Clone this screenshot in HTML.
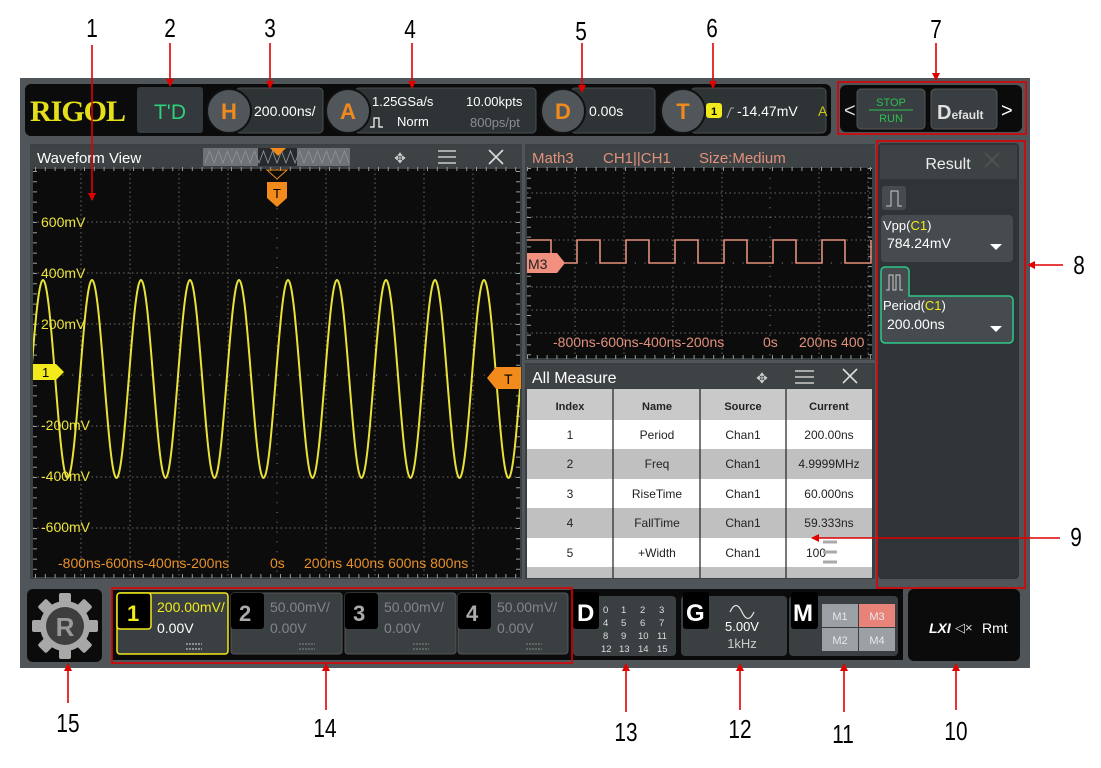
<!DOCTYPE html>
<html><head><meta charset="utf-8"><style>
html,body{margin:0;padding:0;background:#fff;width:1101px;height:768px;overflow:hidden}
svg{display:block;font-family:"Liberation Sans",sans-serif}
</style></head><body>
<svg width="1101" height="768" viewBox="0 0 1101 768" xmlns="http://www.w3.org/2000/svg">
<defs>
<clipPath id="cw"><rect x="33" y="169" width="487" height="408"/></clipPath>
<clipPath id="cm"><rect x="527" y="168" width="345" height="190"/></clipPath>
<marker id="ar" markerWidth="8" markerHeight="8" refX="7" refY="4" orient="auto" markerUnits="userSpaceOnUse"><path d="M0 0 L8 4 L0 8 z" fill="#e00000"/></marker>
</defs>
<rect x="20" y="78" width="1010" height="590" fill="#4f5558"/>
<rect x="25" y="84" width="806" height="52" rx="6" fill="#0b0b0b"/>
<text x="30" y="121" font-family="Liberation Serif,serif" font-weight="bold" font-size="30" fill="#e3e01a" letter-spacing="-1">RIGOL</text>
<rect x="137" y="87" width="66" height="46" rx="3" fill="#33393c"/>
<text x="170" y="119" font-size="21" fill="#2fd07a" text-anchor="middle">T'D</text>
<rect x="236" y="88" width="87" height="45" rx="4" fill="#2e3336" stroke="#4a4f52"/>
<circle cx="229" cy="111" r="22" fill="#50565a" stroke="#111" stroke-width="2"/>
<text x="229" y="119" font-size="22" font-weight="bold" fill="#f08a1c" text-anchor="middle">H</text>
<text x="254" y="116" font-size="14" fill="#fff">200.00ns/</text>
<rect x="355" y="88" width="181" height="45" rx="4" fill="#2e3336" stroke="#4a4f52"/>
<circle cx="348" cy="111" r="22" fill="#50565a" stroke="#111" stroke-width="2"/>
<text x="348" y="119" font-size="22" font-weight="bold" fill="#f08a1c" text-anchor="middle">A</text>
<text x="372" y="106" font-size="13" fill="#fff">1.25GSa/s</text>
<path d="M370 127 h4 v-9 h5 v9 h4" stroke="#fff" fill="none" stroke-width="1.2"/>
<text x="397" y="126" font-size="13" fill="#fff">Norm</text>
<text x="466" y="106" font-size="13" fill="#fff">10.00kpts</text>
<text x="470" y="127" font-size="13" fill="#8a8f92">800ps/pt</text>
<rect x="571" y="88" width="84" height="45" rx="4" fill="#2e3336" stroke="#4a4f52"/>
<circle cx="563" cy="111" r="22" fill="#50565a" stroke="#111" stroke-width="2"/>
<text x="563" y="119" font-size="22" font-weight="bold" fill="#f08a1c" text-anchor="middle">D</text>
<text x="589" y="116" font-size="14" fill="#fff">0.00s</text>
<rect x="691" y="88" width="135" height="45" rx="4" fill="#2e3336" stroke="#4a4f52"/>
<circle cx="683" cy="111" r="22" fill="#50565a" stroke="#111" stroke-width="2"/>
<text x="683" y="119" font-size="22" font-weight="bold" fill="#f08a1c" text-anchor="middle">T</text>
<rect x="706" y="103" width="16" height="15" rx="3" fill="#f2ea1a"/>
<text x="714" y="115" font-size="11" font-weight="bold" fill="#000" text-anchor="middle">1</text>
<path d="M727 118 l4 -10 h3" stroke="#aaa" fill="none"/>
<text x="737" y="116" font-size="14" fill="#fff">-14.47mV</text>
<text x="818" y="116" font-size="14" fill="#c8c81a">A</text>
<rect x="840" y="85" width="182" height="47" rx="6" fill="#0b0b0b"/>
<text x="844" y="117" font-size="20" fill="#ddd">&lt;</text>
<rect x="857" y="89" width="68" height="40" rx="4" fill="#383e41" stroke="#555"/>
<text x="891" y="106" font-size="11" fill="#2ec050" text-anchor="middle">STOP</text>
<line x1="869" y1="110" x2="913" y2="110" stroke="#2ec050"/>
<text x="891" y="122" font-size="11" fill="#2ec050" text-anchor="middle">RUN</text>
<rect x="931" y="89" width="66" height="40" rx="4" fill="#383e41" stroke="#555"/>
<text x="937" y="119" font-size="20" font-weight="bold" fill="#e0e0e0">D<tspan font-size="12">efault</tspan></text>
<text x="1001" y="117" font-size="20" fill="#fff">&gt;</text>

<rect x="30" y="144" width="492" height="435" fill="#3a3f42"/>
<rect x="30" y="145" width="492" height="23" fill="#3d4245"/>
<text x="37" y="163" font-size="15" fill="#fff">Waveform View</text>
<rect x="203" y="148" width="147" height="18" fill="#6e7376"/>
<rect x="258" y="148" width="39" height="18" fill="#262a2c"/>
<path d="M205 163 l4.5 -12 l4.5 12 l4.5 -12 l4.5 12 l4.5 -12 l4.5 12 l4.5 -12 l4.5 12 l4.5 -12 l4.5 12 l4.5 -12 l4.5 12 l4.5 -12 l4.5 12 l4.5 -12 l4.5 12 l4.5 -12 l4.5 12 l4.5 -12 l4.5 12 l4.5 -12 l4.5 12 l4.5 -12 l4.5 12 l4.5 -12 l4.5 12 l4.5 -12 l4.5 12 l4.5 -12 l4.5 12 l4.5 -12 l4.5 12" stroke="#8d9295" fill="none" stroke-width="0.9"/>
<path d="M270 148 h16 l-8 8z" fill="#f08a1c"/>
<text x="400" y="163" font-size="14" fill="#ccc" text-anchor="middle">✥</text>
<path d="M438 151 h18 M438 157 h18 M438 163 h18" stroke="#ccc" stroke-width="1.6"/>
<path d="M489 150 l14 14 M503 150 l-14 14" stroke="#ddd" stroke-width="1.6"/>
<rect x="33" y="169" width="487" height="408" fill="#0c0c0c"/>
<g stroke="#6a6a6a" stroke-width="1" stroke-dasharray="1.5 3" fill="none">
<path d="M81 169V577M130 169V577M179 169V577M228 169V577M326 169V577M375 169V577M424 169V577M473 169V577"/>
<path d="M33 222H520M33 273H520M33 324H520M33 426H520M33 477H520M33 528H520"/>
</g>
<g stroke="#888" stroke-width="1" stroke-dasharray="1 8.8" fill="none"><path d="M33 375H520M277 169V577"/></g>
<g stroke="#999" stroke-width="4" stroke-dasharray="1 8.8" fill="none"><path d="M35 169H520M35 576H520"/></g>
<g stroke="#999" stroke-width="4" stroke-dasharray="1 9.2" fill="none"><path d="M35 171V577M518 171V577"/></g>
<g clip-path="url(#cw)">
<path d="M18.5 478 C27.4 478 34.1 280 43 280 S58.6 478 67.5 478 S83.1 280 92 280 S107.6 478 116.5 478 S132.1 280 141 280 S156.6 478 165.5 478 S181.1 280 190 280 S205.6 478 214.5 478 S230.1 280 239 280 S254.6 478 263.5 478 S279.1 280 288 280 S303.6 478 312.5 478 S328.1 280 337 280 S352.6 478 361.5 478 S377.1 280 386 280 S401.6 478 410.5 478 S426.1 280 435 280 S450.6 478 459.5 478 S475.1 280 484 280 S499.6 478 508.5 478 S524.1 280 533 280" stroke="#e8e23a" stroke-width="2" fill="none"/>
</g>
<g font-size="14" fill="#ece43a">
<text x="41" y="227">600mV</text><text x="41" y="278">400mV</text><text x="41" y="329">200mV</text>
<text x="41" y="430">-200mV</text><text x="41" y="481">-400mV</text><text x="41" y="532">-600mV</text>
</g>
<g font-size="14" fill="#e8902a">
<text x="58" y="568">-800ns-600ns-400ns-200ns</text><text x="270" y="568">0s</text><text x="304" y="568">200ns 400ns 600ns 800ns</text>
</g>
<path d="M33 364 h23 l8 8 l-8 8 h-23z" fill="#f2ea1a"/>
<text x="42" y="377" font-size="13" fill="#000">1</text>
<path d="M521 367 v22 h-25 l-9 -11 l9 -11z" fill="#f28a1c"/>
<text x="504" y="384" font-size="14" fill="#000">T</text>
<path d="M267 170 h20 l-10 9z" fill="none" stroke="#f08a1c"/>
<path d="M267 182 h20 v16 l-10 9 l-10 -9z" fill="#f28a1c"/>
<text x="277" y="198" font-size="13" fill="#000" text-anchor="middle">T</text>

<rect x="525" y="144" width="350" height="216" fill="#3a3f42"/>
<rect x="525" y="145" width="350" height="23" fill="#3d4245"/>
<g font-size="15" fill="#e3907c"><text x="532" y="163">Math3</text><text x="603" y="163">CH1||CH1</text><text x="699" y="163">Size:Medium</text></g>
<rect x="527" y="168" width="345" height="190" fill="#0c0c0c"/>
<g stroke="#6a6a6a" stroke-dasharray="1.5 3" fill="none">
<path d="M575 168V358M624 168V358M673 168V358M722 168V358M819 168V358M868 168V358"/>
<path d="M527 193H872M527 217H872M527 240H872M527 287H872M527 310H872M527 333H872"/>
</g>
<g stroke="#999" stroke-dasharray="1 8.8" fill="none"><path d="M527 263H872M770 168V358"/></g>
<g stroke="#999" stroke-width="4" stroke-dasharray="1 8.8" fill="none"><path d="M527 169H872M527 357H872M529 168V358M870 168V358"/></g>
<g clip-path="url(#cm)">
<path d="M527 240 H551 V263 H577 V240 H600 V263 H626 V240 H649 V263 H675 V240 H698 V263 H724 V240 H747 V263 H773 V240 H796 V263 H822 V240 H845 V263 H871 V240" stroke="#e3907c" stroke-width="1.6" fill="none"/>
</g>
<path d="M527 253 h30 l8 10 l-8 10 h-30z" fill="#f29080"/>
<text x="528" y="269" font-size="14" fill="#222">M3</text>
<g font-size="14" fill="#e3907c"><text x="553" y="347">-800ns-600ns-400ns-200ns</text><text x="763" y="347">0s</text><text x="799" y="347">200ns 400</text></g>

<rect x="525" y="363" width="350" height="216" fill="#3a3f42"/>
<rect x="526" y="365" width="346" height="23" fill="#3d4245"/>
<text x="532" y="383" font-size="16" fill="#fff">All Measure</text>
<text x="762" y="383" font-size="14" fill="#ccc" text-anchor="middle">✥</text>
<path d="M795 371 h19 M795 377 h19 M795 383 h19" stroke="#ccc" stroke-width="1.6"/>
<path d="M843 369 l14 14 M857 369 l-14 14" stroke="#ddd" stroke-width="1.6"/>
<rect x="527" y="389" width="345" height="31" fill="#c9c9c9"/>
<rect x="527" y="420" width="345" height="29" fill="#fff"/>
<rect x="527" y="449" width="345" height="30" fill="#c0c0c0"/>
<rect x="527" y="479" width="345" height="29" fill="#fff"/>
<rect x="527" y="508" width="345" height="30" fill="#c0c0c0"/>
<rect x="527" y="538" width="345" height="29" fill="#fff"/>
<rect x="527" y="567" width="345" height="11" fill="#c0c0c0"/>
<path d="M613 389V578M700 389V578M786 389V578" stroke="#222" stroke-width="1.2"/>
<g font-size="12" fill="#222" text-anchor="middle">
<g font-weight="bold" font-size="11"><text x="570" y="410">Index</text><text x="657" y="410">Name</text><text x="743" y="410">Source</text><text x="829" y="410">Current</text></g>
<text x="570" y="439">1</text><text x="657" y="439">Period</text><text x="743" y="439">Chan1</text><text x="829" y="439">200.00ns</text>
<text x="570" y="468">2</text><text x="657" y="468">Freq</text><text x="743" y="468">Chan1</text><text x="829" y="468">4.9999MHz</text>
<text x="570" y="498">3</text><text x="657" y="498">RiseTime</text><text x="743" y="498">Chan1</text><text x="829" y="498">60.000ns</text>
<text x="570" y="527">4</text><text x="657" y="527">FallTime</text><text x="743" y="527">Chan1</text><text x="829" y="527">59.333ns</text>
<text x="570" y="557">5</text><text x="657" y="557">+Width</text><text x="743" y="557">Chan1</text><text x="816" y="557">100</text>
</g>
<path d="M823 542 h14 M823 552 h14 M823 562 h14" stroke="#aaa" stroke-width="3"/>

<rect x="878" y="143" width="141" height="436" rx="4" fill="#2f3437"/>
<rect x="880" y="145" width="137" height="34" fill="#3d4245"/>
<text x="948" y="169" font-size="16" fill="#eee" text-anchor="middle">Result</text>
<path d="M985 153 l14 14 M999 153 l-14 14" stroke="#555" stroke-width="1.4"/>
<rect x="882" y="186" width="24" height="24" rx="3" fill="#454b4e"/>
<path d="M886 206 h5 v-15 h7 v15 h4" stroke="#ccc" fill="none"/>
<rect x="881" y="215" width="132" height="47" rx="4" fill="#454b4e"/>
<text x="883" y="230" font-size="13" fill="#fff">Vpp(<tspan fill="#f2ea1a">C1</tspan>)</text>
<text x="887" y="248" font-size="14" fill="#fff">784.24mV</text>
<path d="M990 244 h12 l-6 6z" fill="#fff"/>
<path d="M881 271 a4 4 0 0 1 4 -4 h20 a4 4 0 0 1 4 4 v25 h100 a4 4 0 0 1 4 4 v39 a4 4 0 0 1 -4 4 h-124 a4 4 0 0 1 -4 -4z" fill="#454b4e" stroke="#2fc88a" stroke-width="1.5"/>
<path d="M886 290 h3 v-15 h4 v15 h3 v-15 h4 v15 h3" stroke="#ccc" fill="none"/>
<text x="883" y="310" font-size="13" fill="#fff">Period(<tspan fill="#f2ea1a">C1</tspan>)</text>
<text x="887" y="329" font-size="14" fill="#fff">200.00ns</text>
<path d="M990 326 h12 l-6 6z" fill="#fff"/>

<rect x="27" y="589" width="75" height="73" rx="6" fill="#0b0b0b"/>
<g transform="translate(65 626)">
<circle r="25" fill="#a8a8a8"/>
<g fill="#a8a8a8">
<rect x="-6" y="-33" width="12" height="10" rx="2"/>
<rect x="-6" y="-33" width="12" height="10" rx="2" transform="rotate(45)"/>
<rect x="-6" y="-33" width="12" height="10" rx="2" transform="rotate(90)"/>
<rect x="-6" y="-33" width="12" height="10" rx="2" transform="rotate(135)"/>
<rect x="-6" y="-33" width="12" height="10" rx="2" transform="rotate(180)"/>
<rect x="-6" y="-33" width="12" height="10" rx="2" transform="rotate(225)"/>
<rect x="-6" y="-33" width="12" height="10" rx="2" transform="rotate(270)"/>
<rect x="-6" y="-33" width="12" height="10" rx="2" transform="rotate(315)"/>
</g>
<circle r="19" fill="#3e3e3e"/>
<text y="10" font-size="26" font-weight="bold" fill="#999" text-anchor="middle">R</text>
</g>
<rect x="112" y="590" width="459" height="70" fill="#0b0b0b"/>
<rect x="117" y="593" width="111" height="61" rx="3" fill="#3a3f42" stroke="#f2ea1a" stroke-width="1.5"/>
<rect x="117" y="593" width="34" height="36" rx="3" fill="#000" stroke="#f2ea1a" stroke-width="1.5"/>
<text x="127" y="621" font-size="22" font-weight="bold" fill="#f2ea1a">1</text>
<text x="157" y="612" font-size="14" fill="#f2ea1a">200.00mV/</text>
<text x="157" y="633" font-size="14" fill="#fff">0.00V</text>
<path d="M186 644 h16 M186 649 h16" stroke="#ddd" stroke-dasharray="2 1"/>
<rect x="231" y="593" width="111" height="61" rx="3" fill="#3a3f42" stroke="#555"/>
<rect x="231" y="593" width="33" height="36" rx="3" fill="#000"/>
<text x="239" y="621" font-size="22" font-weight="bold" fill="#aaa">2</text>
<text x="270" y="612" font-size="14" fill="#80868a">50.00mV/</text><text x="270" y="633" font-size="14" fill="#80868a">0.00V</text>
<path d="M299 644 h16 M299 649 h16" stroke="#888" stroke-dasharray="2 1"/>
<rect x="345" y="593" width="111" height="61" rx="3" fill="#3a3f42" stroke="#555"/>
<rect x="345" y="593" width="33" height="36" rx="3" fill="#000"/>
<text x="353" y="621" font-size="22" font-weight="bold" fill="#aaa">3</text>
<text x="384" y="612" font-size="14" fill="#80868a">50.00mV/</text><text x="384" y="633" font-size="14" fill="#80868a">0.00V</text>
<path d="M413 644 h16 M413 649 h16" stroke="#888" stroke-dasharray="2 1"/>
<rect x="458" y="593" width="110" height="61" rx="3" fill="#3a3f42" stroke="#555"/>
<rect x="458" y="593" width="33" height="36" rx="3" fill="#000"/>
<text x="466" y="621" font-size="22" font-weight="bold" fill="#aaa">4</text>
<text x="497" y="612" font-size="14" fill="#80868a">50.00mV/</text><text x="497" y="633" font-size="14" fill="#80868a">0.00V</text>
<path d="M526 644 h16 M526 649 h16" stroke="#888" stroke-dasharray="2 1"/>
<rect x="571" y="589" width="332" height="71" fill="#0b0b0b"/>
<rect x="573" y="596" width="103" height="60" rx="4" fill="#3a3f42"/>
<rect x="573" y="592" width="26" height="37" rx="3" fill="#000"/>
<text x="577" y="621" font-size="24" font-weight="bold" fill="#fff">D</text>
<g font-size="9.5" fill="#ddd">
<text x="603" y="613">0</text><text x="621" y="613">1</text><text x="640" y="613">2</text><text x="659" y="613">3</text>
<text x="603" y="626">4</text><text x="621" y="626">5</text><text x="640" y="626">6</text><text x="659" y="626">7</text>
<text x="603" y="639">8</text><text x="621" y="639">9</text><text x="638" y="639">10</text><text x="657" y="639">11</text>
<text x="601" y="652">12</text><text x="619" y="652">13</text><text x="638" y="652">14</text><text x="657" y="652">15</text>
</g>
<rect x="681" y="596" width="106" height="60" rx="4" fill="#3a3f42"/>
<rect x="683" y="592" width="26" height="37" rx="3" fill="#000"/>
<text x="686" y="621" font-size="24" font-weight="bold" fill="#fff">G</text>
<path d="M730 612 q6 -13 12 0 q6 13 12 0" stroke="#ddd" fill="none" stroke-width="1.3"/>
<text x="742" y="631" font-size="13" fill="#fff" text-anchor="middle">5.00V</text>
<text x="742" y="648" font-size="13" fill="#ccc" text-anchor="middle">1kHz</text>
<rect x="789" y="596" width="109" height="60" rx="4" fill="#3a3f42"/>
<rect x="791" y="592" width="27" height="37" rx="3" fill="#000"/>
<text x="793" y="621" font-size="24" font-weight="bold" fill="#fff">M</text>
<rect x="822" y="604" width="36" height="23" fill="#9aa0a4"/>
<rect x="859" y="604" width="36" height="23" fill="#e8837a"/>
<rect x="822" y="628" width="36" height="23" fill="#9aa0a4"/>
<rect x="859" y="628" width="36" height="23" fill="#9aa0a4"/>
<g font-size="11" fill="#e8e8e8" text-anchor="middle"><text x="840" y="620">M1</text><text x="877" y="620">M3</text><text x="840" y="644">M2</text><text x="877" y="644">M4</text></g>
<rect x="908" y="589" width="112" height="72" rx="6" fill="#0b0b0b"/>
<text x="929" y="633" font-size="14" font-weight="bold" font-style="italic" fill="#fff">LXI</text>
<text x="955" y="632" font-size="13" fill="#ddd">◁×</text>
<text x="982" y="633" font-size="14" fill="#fff">Rmt</text>

<g stroke="#e00000" stroke-width="1.6" fill="none">
<rect x="838" y="82" width="188" height="52"/>
<rect x="877" y="141" width="148" height="447"/>
<rect x="112" y="588" width="460" height="75"/>
<path d="M92 45 V200" marker-end="url(#ar)"/>
<path d="M170 43 V86" marker-end="url(#ar)"/>
<path d="M270 43 V88" marker-end="url(#ar)"/>
<path d="M412 43 V88" marker-end="url(#ar)"/>
<path d="M582 43 V92" marker-end="url(#ar)"/>
<path d="M713 43 V88" marker-end="url(#ar)"/>
<path d="M936 43 V80" marker-end="url(#ar)"/>
<path d="M1063 265 H1028" marker-end="url(#ar)"/>
<path d="M1060 538 H812" marker-end="url(#ar)"/>
<path d="M68 703 V664" marker-end="url(#ar)"/>
<path d="M326 710 V664" marker-end="url(#ar)"/>
<path d="M626 712 V664" marker-end="url(#ar)"/>
<path d="M740 710 V664" marker-end="url(#ar)"/>
<path d="M844 712 V664" marker-end="url(#ar)"/>
<path d="M956 710 V664" marker-end="url(#ar)"/>
</g>
<g font-size="26" fill="#000" text-anchor="middle">
<text transform="translate(92 37) scale(0.8 1)">1</text><text transform="translate(170 37) scale(0.8 1)">2</text><text transform="translate(270 37) scale(0.8 1)">3</text><text transform="translate(410 38) scale(0.8 1)">4</text>
<text transform="translate(581 40) scale(0.8 1)">5</text><text transform="translate(712 37) scale(0.8 1)">6</text><text transform="translate(936 38) scale(0.8 1)">7</text>
<text transform="translate(1079 274) scale(0.8 1)">8</text><text transform="translate(1076 546) scale(0.8 1)">9</text>
<text transform="translate(68 732) scale(0.8 1)">15</text><text transform="translate(325 737) scale(0.8 1)">14</text><text transform="translate(626 741) scale(0.8 1)">13</text><text transform="translate(740 738) scale(0.8 1)">12</text><text transform="translate(843 743) scale(0.8 1)">11</text><text transform="translate(956 740) scale(0.8 1)">10</text>
</g>
</svg>
</body></html>
